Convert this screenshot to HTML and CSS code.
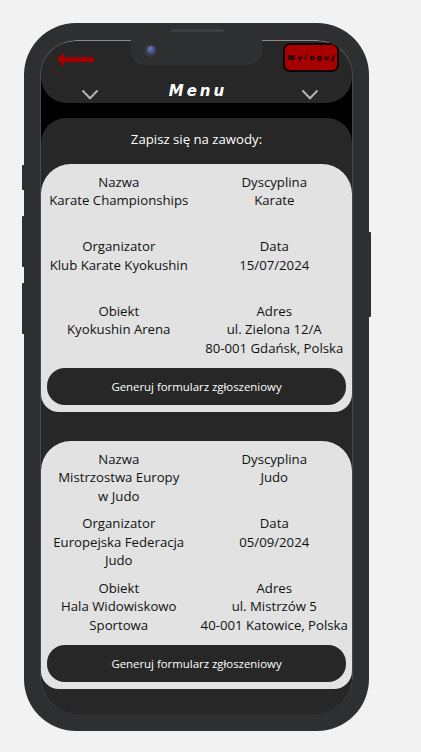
FILE: index.html
```html
<!DOCTYPE html>
<html lang="pl">
<head>
<meta charset="utf-8">
<title>Zapisz się na zawody</title>
<link rel="stylesheet" href="styles.css">
</head>
<body>
<div class="phone">
  <span class="side side-l1"></span>
  <span class="side side-l2"></span>
  <span class="side side-l3"></span>
  <span class="side side-r1"></span>
  <span class="speaker"></span>
  <div class="screen">
    <div class="notch"><span class="camera"></span></div>
    <header class="topbar">
      <div class="topbar-row">
        <a class="back" href="#" aria-label="Wstecz">
          <svg width="37" height="16" viewBox="0 0 37 16"><polygon points="0,7.5 7,0 7,15" fill="#a40000"/><rect x="6" y="5.2" width="31" height="5" fill="#a40000"/></svg>
        </a>
        <button class="logout" type="button">Wyloguj</button>
      </div>
      <div class="menu-row">
        <svg class="chev chev-left" width="18" height="11" viewBox="0 0 18 11"><polyline points="1.5,1.5 9,9.2 16.5,1.5" fill="none" stroke="#b4b4b4" stroke-width="2"/></svg>
        <span class="menu-title">Menu</span>
        <svg class="chev chev-right" width="18" height="11" viewBox="0 0 18 11"><polyline points="1.5,1.5 9,9.2 16.5,1.5" fill="none" stroke="#b4b4b4" stroke-width="2"/></svg>
      </div>
    </header>
    <main class="panel">
      <h1 class="panel-title">Zapisz się na zawody:</h1>
      <article class="card">
        <div class="card-grid">
          <div class="cell"><div>Nazwa</div><div>Karate Championships</div></div>
          <div class="cell"><div>Dyscyplina</div><div>Karate</div></div>
          <div class="cell"><div>Organizator</div><div>Klub Karate Kyokushin</div></div>
          <div class="cell"><div>Data</div><div>15/07/2024</div></div>
          <div class="cell"><div>Obiekt</div><div>Kyokushin Arena</div></div>
          <div class="cell"><div>Adres</div><div>ul. Zielona 12/A<br>80-001 Gdańsk, Polska</div></div>
        </div>
        <button class="generate" type="button">Generuj formularz zgłoszeniowy</button>
      </article>
      <article class="card">
        <div class="card-grid">
          <div class="cell"><div>Nazwa</div><div>Mistrzostwa Europy<br>w Judo</div></div>
          <div class="cell"><div>Dyscyplina</div><div>Judo</div></div>
          <div class="cell"><div>Organizator</div><div>Europejska Federacja<br>Judo</div></div>
          <div class="cell"><div>Data</div><div>05/09/2024</div></div>
          <div class="cell"><div>Obiekt</div><div>Hala Widowiskowo<br>Sportowa</div></div>
          <div class="cell"><div>Adres</div><div>ul. Mistrzów 5<br>40-001 Katowice, Polska</div></div>
        </div>
        <button class="generate" type="button">Generuj formularz zgłoszeniowy</button>
      </article>
    </main>
  </div>
</div>
</body>
</html>
```

FILE: styles.css
```css
* { box-sizing: border-box; }

html, body {
  margin: 0;
  height: 100%;
}

body {
  background: #f2f2f2;
  padding: 23px 0 0 24px;
  overflow: hidden;
  font-family: "Open Sans", "Noto Sans", sans-serif;
}

.phone {
  position: relative;
  width: 345px;
  height: 708px;
  padding: 17px;
  border-radius: 52px;
  background: #2e2f31;
}

.side {
  position: absolute;
  width: 3px;
  background: #2e2f31;
}
.side-l1 { left: -2px; top: 142px; height: 25px; border-radius: 1px 0 0 1px; }
.side-l2 { left: -2px; top: 193px; height: 51px; border-radius: 1px 0 0 1px; }
.side-l3 { left: -2px; top: 260px; height: 51px; border-radius: 1px 0 0 1px; }
.side-r1 { right: -2px; top: 209px; height: 85px; border-radius: 0 1px 1px 0; }

.speaker {
  position: absolute;
  top: 6px;
  left: 147px;
  width: 53px;
  height: 3px;
  border-radius: 2px;
  background: #3d3e42;
}

.screen {
  position: relative;
  width: 311px;
  height: 674px;
  border-radius: 35px 35px 38px 38px;
  overflow: hidden;
  background: #000;
  display: flex;
  flex-direction: column;
  box-shadow: -1px 0 0 #4a4a4c, 1px 0 0 #4a4a4c;
}

.notch {
  position: absolute;
  top: 0;
  left: 90px;
  width: 131px;
  height: 25px;
  border-radius: 0 0 14px 14px;
  background: #2e2f31;
  z-index: 2;
}

.camera {
  position: absolute;
  left: 13px;
  top: 3.5px;
  width: 13px;
  height: 13px;
  border-radius: 50%;
  background: #393a3f;
}
.camera::after {
  content: "";
  position: absolute;
  left: 2.5px;
  top: 2.5px;
  width: 8px;
  height: 8px;
  border-radius: 50%;
  background: radial-gradient(circle at 40% 35%, #6a7bb0 0%, #44548a 55%, #2f3a63 100%);
}

.topbar {
  flex: none;
  height: 63px;
  background: #272727;
  border-top: 1px solid #8c8c8c;
  border-radius: 35px 35px 26px 26px;
  display: flex;
  flex-direction: column;
}

.topbar-row {
  height: 36px;
  padding: 2px 13px 0 16px;
  display: flex;
  justify-content: space-between;
  align-items: flex-start;
}

.back {
  display: block;
  margin-top: 9px;
  line-height: 0;
}

.logout {
  width: 56px;
  height: 29px;
  padding: 0 0 0 2px;
  border: 2px solid #120000;
  border-radius: 7px;
  background: #a80000;
  color: #000;
  font-family: "DejaVu Sans", sans-serif;
  font-size: 7px;
  font-weight: bold;
  font-style: italic;
  letter-spacing: 2.5px;
  text-align: center;
}

.menu-row {
  display: grid;
  grid-template-columns: 1fr auto 1fr;
  align-items: start;
}

.chev { display: block; margin-top: 12px; }
.chev-left { justify-self: start; margin-left: 40px; }
.chev-right { justify-self: end; margin-right: 33px; }

.menu-title {
  margin-top: 6px;
  padding-left: 3px;
  color: #fff;
  font-family: "DejaVu Sans", sans-serif;
  font-size: 15px;
  line-height: 17px;
  font-weight: bold;
  font-style: italic;
  letter-spacing: 3px;
}

.panel {
  flex: 1;
  margin-top: 15px;
  background: #272727;
  border-radius: 25px 25px 0 0;
}

.panel-title {
  margin: 0;
  padding: 12px 0 14.5px;
  color: #fff;
  font-size: 13.2px;
  line-height: 19px;
  font-weight: normal;
  text-align: center;
}

.card {
  margin-bottom: 29px;
  padding: 9px 0 7px;
  background: #e2e2e2;
  border-radius: 30px 30px 18px 18px;
}

.card-grid {
  display: grid;
  grid-template-columns: 1fr 1fr;
  grid-auto-rows: 56px;
  row-gap: 8.5px;
}

.cell {
  color: #111;
  font-size: 13.2px;
  line-height: 18.7px;
  text-align: center;
  white-space: nowrap;
}

.generate {
  display: block;
  width: calc(100% - 12px);
  height: 37px;
  margin: 10px 6px 0;
  border: none;
  border-radius: 18px;
  background: #272727;
  color: #fff;
  font-family: "Open Sans", "Noto Sans", sans-serif;
  font-size: 11.4px;
  font-weight: 500;
}
```
